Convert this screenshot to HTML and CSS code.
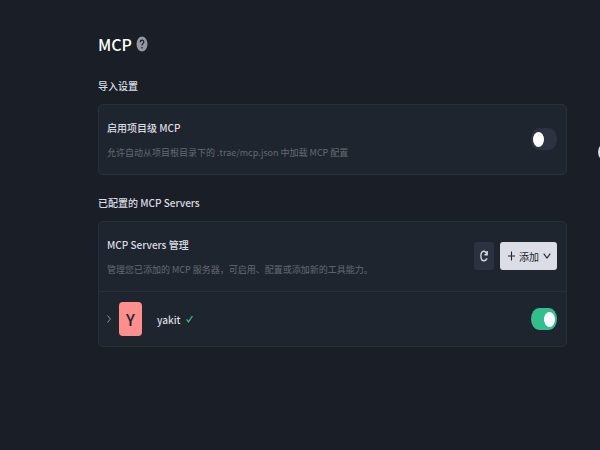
FILE: index.html
```html
<!DOCTYPE html>
<html lang="zh-CN">
<head>
  <meta charset="UTF-8">
  <title>MCP</title>
  <link rel="stylesheet" href="styles.css">
</head>
<body>
  <main>
    <header class="page-title">
      <h1>MCP</h1>
      <svg class="help" viewBox="0 0 12 16" aria-hidden="true">
        <ellipse cx="6" cy="8" rx="5.5" ry="7.5" fill="#9297a1"/>
        <path d="M4.3 6.2C4.3 3.4 7.8 3.5 7.8 6C7.8 7.7 6 7.7 6 9.5M6 11v1.4" fill="none" stroke="#1a1d27" stroke-width="1.2"/>
      </svg>
    </header>

    <section>
      <h2>导入设置</h2>
      <div class="card">
        <div class="row">
          <div class="info">
            <label class="name" for="projectMcp">启用项目级 MCP</label>
            <p>允许自动从项目根目录下的 .trae/mcp.json 中加载 MCP 配置</p>
          </div>
          <input type="checkbox" class="switch" id="projectMcp">
        </div>
      </div>
    </section>

    <section>
      <h2>已配置的 MCP Servers</h2>
      <div class="card">
        <div class="row">
          <div class="info">
            <h3 class="name">MCP Servers 管理</h3>
            <p>管理您已添加的 MCP 服务器，可启用、配置或添加新的工具能力。</p>
          </div>
          <div class="actions">
            <button class="refresh" aria-label="刷新">
              <svg viewBox="0 0 8 12" width="8" height="12" fill="none" stroke="#d3d6de" stroke-width="1.4">
                <path d="M7 8.4C6.3 10 5.2 10.8 4 10.8C2.2 10.8 .9 8.7 .9 6S2.2 1.2 4 1.2C5.3 1.2 6.2 2.4 6.9 4.4M7.2 1v3.7H4.4"/>
              </svg>
            </button>
            <button class="add">
              <svg viewBox="0 0 7 10" width="7" height="10" fill="none" stroke="#20242e">
                <path d="M3.5 .5v9M0 5h7" stroke-width="1.1"/>
              </svg>
              <span>添加</span>
              <svg viewBox="0 0 8 6" width="8" height="6" fill="none" stroke="#20242e">
                <path d="M.7 .6L4 5L7.3 .6" stroke-width="1.1"/>
              </svg>
            </button>
          </div>
        </div>
        <div class="server">
          <button class="expand" aria-label="展开">
            <svg viewBox="0 0 4 8" width="4" height="8" fill="none" stroke="#8b909c">
              <path d="M.5 .5L3.4 4L.5 7.5"/>
            </svg>
          </button>
          <span class="avatar">Y</span>
          <label class="server-name" for="yakit">yakit</label>
          <svg viewBox="0 0 7 8" width="7" height="8" fill="none" stroke="#2fc08a" aria-hidden="true">
            <path d="M.6 4.4L2.5 6.8L6.4 1" stroke-width="1.3"/>
          </svg>
          <input type="checkbox" class="switch" id="yakit" checked>
        </div>
      </div>
    </section>
  </main>
  <button class="edge-handle" aria-label="侧栏"></button>
</body>
</html>
```

FILE: styles.css
```css
* {
  box-sizing: border-box;
}
body {
  margin: 0;
  background: #1a1e27;
  color: #d9dce3;
  font-family: "Noto Sans CJK SC", "Noto Sans", sans-serif;
  font-size: 10px;
  overflow-x: hidden;
}
main {
  padding: 32px 33px 32px 98px;
}
h1, h2, h3, p {
  margin: 0;
}
button {
  border: none;
  padding: 0;
  font-family: inherit;
  cursor: pointer;
}
.page-title {
  display: flex;
  align-items: center;
  gap: 4px;
  margin-bottom: 2px;
}
h1 {
  font-size: 16px;
  font-weight: 500;
  line-height: 24px;
  color: #fff;
}
.help {
  width: 12px;
  height: 16px;
}
section {
  padding-top: 18px;
}
h2 {
  font-size: 10px;
  font-weight: 500;
  line-height: 20px;
  margin-bottom: 8px;
}
.card {
  background: #1f252f;
  border: 1px solid #2a303b;
  border-radius: 5px;
}
.row {
  display: flex;
  align-items: center;
  justify-content: space-between;
  padding: 12px 9px 13px 8px;
}
.name {
  display: block;
  font-size: 10px;
  font-weight: 500;
  line-height: 22px;
}
.info p {
  font-size: 9px;
  line-height: 16px;
  padding-top: 6px;
  color: #646974;
}
.switch {
  appearance: none;
  flex-shrink: 0;
  display: flex;
  align-items: center;
  width: 26px;
  height: 22px;
  margin: 0;
  padding: 0 2px;
  border-radius: 8px / 11px;
  background: #2c3241;
  cursor: pointer;
}
.switch::before {
  content: "";
  width: 11px;
  height: 15px;
  border-radius: 50%;
  background: #fff;
}
.switch:checked {
  background: #34be8d;
  justify-content: flex-end;
}
.actions {
  display: flex;
  gap: 6px;
}
.actions button {
  display: flex;
  align-items: center;
  justify-content: center;
  height: 28px;
  border-radius: 3px;
}
.refresh {
  width: 20px;
  background: #2c3241;
}
.actions .add {
  gap: 4px;
  padding: 0 6px 0 8px;
  background: #dcdee7;
  color: #20242e;
  font-size: 10px;
}
.server {
  display: flex;
  align-items: center;
  padding: 10px 9px 10px 8px;
  border-top: 1px solid #2a303b;
}
.expand {
  display: flex;
  background: none;
}
.avatar {
  width: 23px;
  margin: 0 15px 0 8px;
  border-radius: 4px;
  background: #ff8f8d;
  color: #20242e;
  font-size: 16px;
  font-weight: 500;
  line-height: 34px;
  text-align: center;
}
.server-name {
  margin-right: 5px;
  font-weight: 500;
}
.server .switch {
  margin-left: auto;
}
/* round handle, mostly off the right edge */
.edge-handle {
  position: absolute;
  top: 142px;
  right: -16px;
  width: 18px;
  height: 20px;
  border-radius: 50%;
  background: #dcdee7;
}
```
